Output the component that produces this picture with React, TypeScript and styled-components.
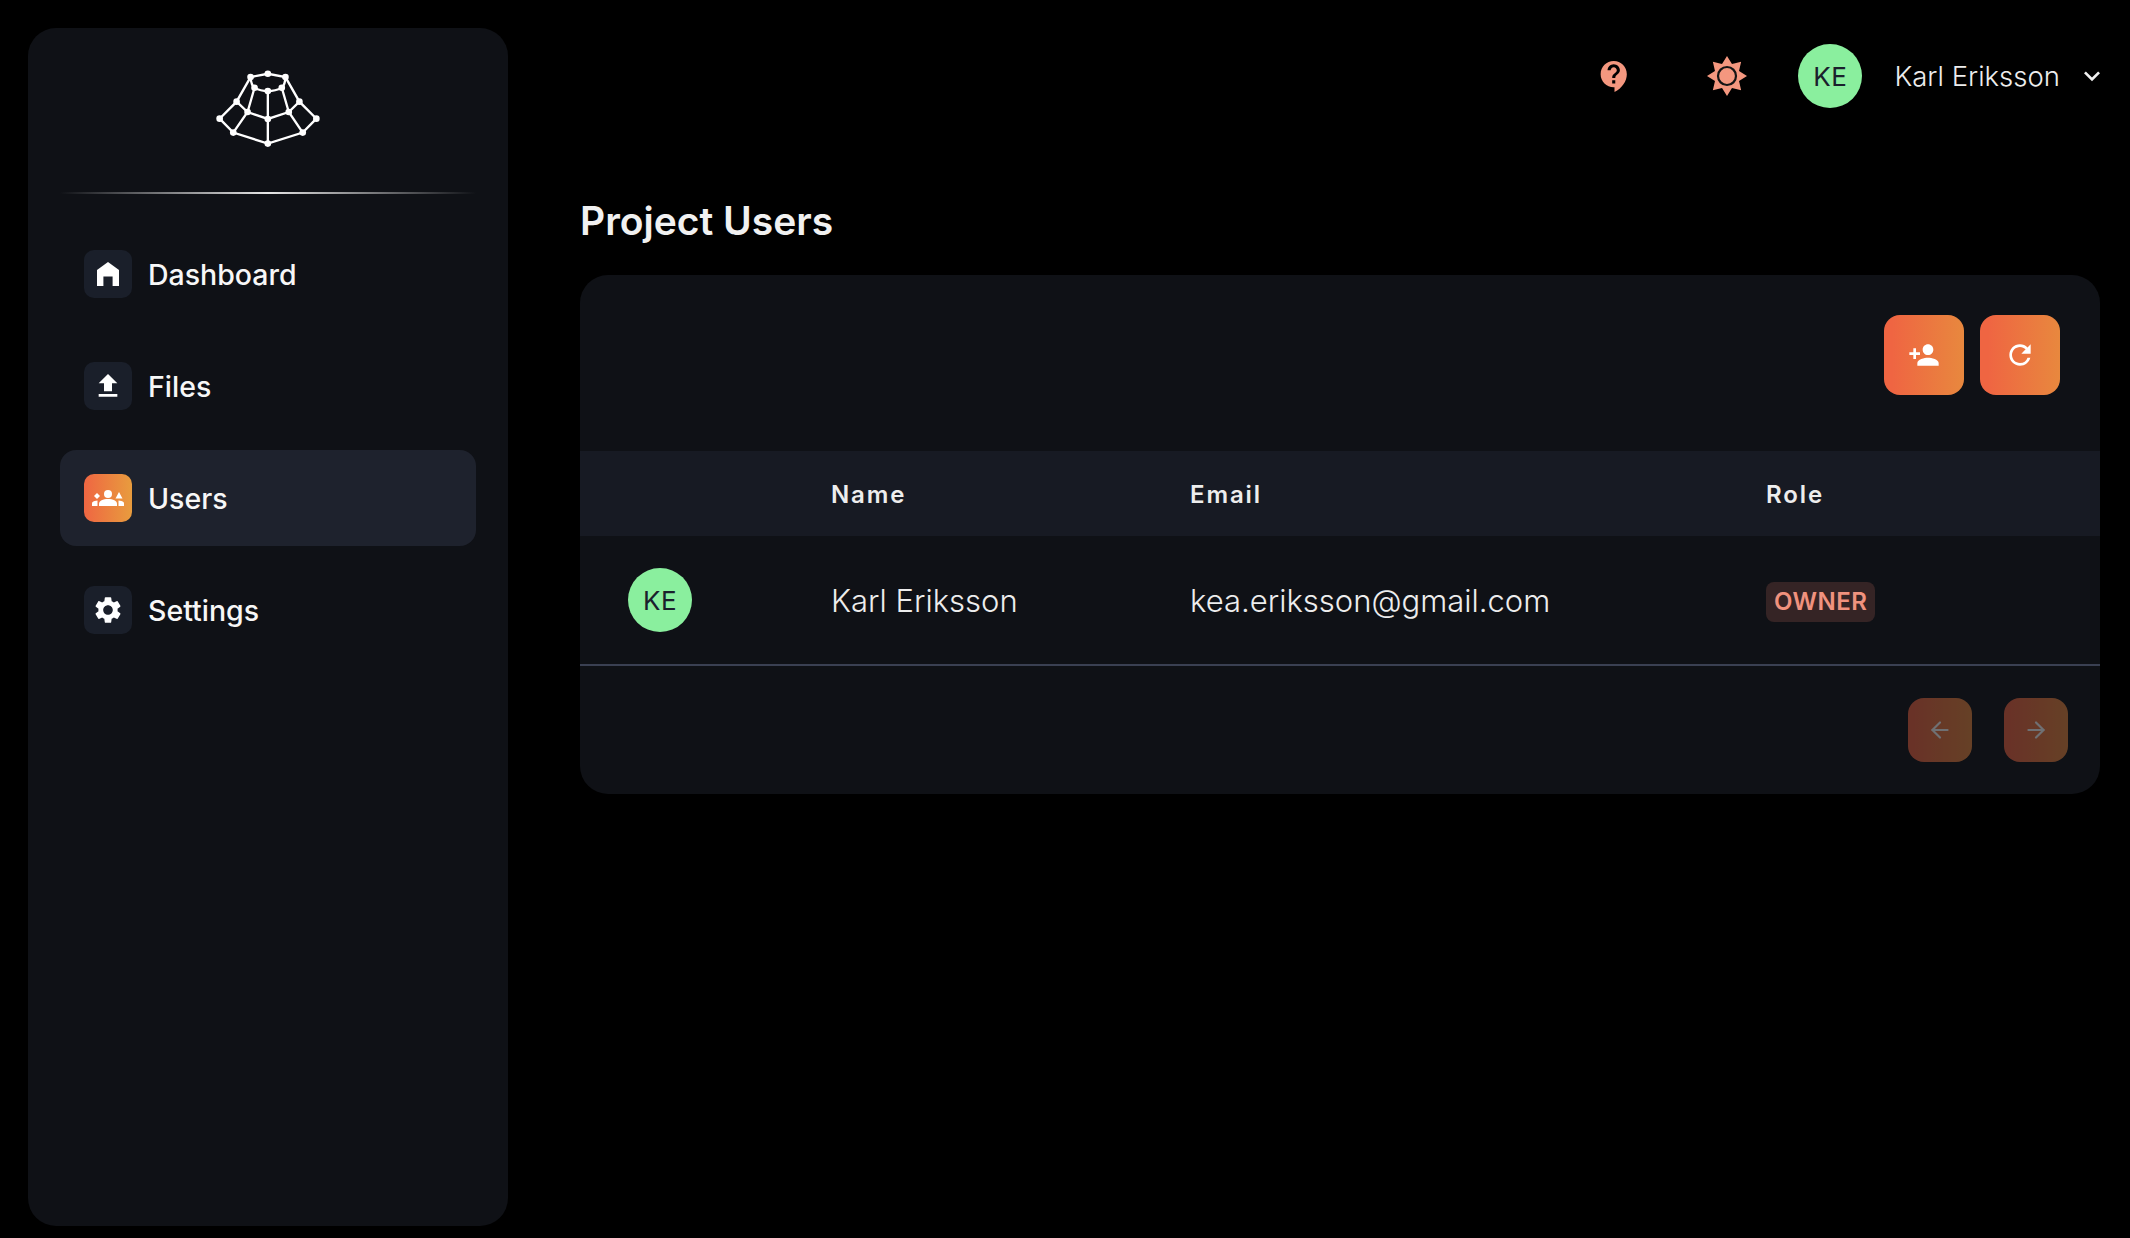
import { createGlobalStyle, styled } from "styled-components";
import { MdContactSupport, MdFileUpload, MdKeyboardArrowDown, MdPersonAdd, MdRefresh, MdSettings } from "react-icons/md";
import { ArrowLeft, ArrowRight } from "lucide-react";

const GlobalStyle = createGlobalStyle`
  * { box-sizing: border-box; }
  html, body { margin: 0; background: #000; }
  body { font-family: Inter, "Liberation Sans", sans-serif; color: #f1f1f1; }
`;

const Page = styled.div`
  display: flex;
  height: 1238px;
  padding: 28px 30px 12px 28px;
  gap: 72px;
`;

const Sidebar = styled.aside`
  width: 480px;
  flex: none;
  background: #0f1116;
  border-radius: 28px;
  padding: 0 32px;
`;

const LogoWrap = styled.div`
  height: 164px;
  display: flex;
  justify-content: center;
  padding-top: 38px;
  svg { display: block; }
`;

const Divider = styled.div`
  height: 2px;
  background: linear-gradient(90deg, transparent, #e6e6e6 50%, transparent);
  margin-bottom: 32px;
`;

const Nav = styled.nav`
  display: flex;
  flex-direction: column;
  gap: 16px;
`;

const NavItem = styled.a<{ $active?: boolean }>`
  height: 96px;
  display: flex;
  align-items: center;
  gap: 16px;
  padding-left: 24px;
  border-radius: 16px;
  background: ${p => (p.$active ? "#1e222d" : "transparent")};
  color: #f7f7f7;
  font-size: 28.5px;
  font-weight: 500;
`;

const NavIcon = styled.span<{ $active?: boolean }>`
  width: 48px;
  height: 48px;
  display: flex;
  align-items: center;
  justify-content: center;
  border-radius: 10px;
  background: ${p => (p.$active ? "linear-gradient(90deg, #ef6642, #e89c3e)" : "#1a1f2a")};
  color: #fff;
  svg { display: block; }
`;

const Main = styled.main`
  flex: 1;
  min-width: 0;
`;

const TopBar = styled.header`
  height: 80px;
  margin-top: 8px;
  display: flex;
  align-items: center;
  justify-content: flex-end;
`;

const TopIcon = styled.span<{ $gap: number }>`
  display: flex;
  color: #f4977f;
  margin-right: ${p => p.$gap}px;
`;

const Avatar = styled.span`
  width: 64px;
  height: 64px;
  border-radius: 50%;
  display: flex;
  align-items: center;
  justify-content: center;
  background: #8aef9e;
  color: #1a202c;
  font-size: 26px;
  font-weight: 400;
  letter-spacing: 0.5px;
`;

const UserName = styled.span`
  margin-left: 32px;
  font-size: 27.5px;
  font-weight: 300;
  color: #ededed;
`;

const Chevron = styled.span`
  display: flex;
  margin-left: 16px;
  margin-right: -8px;
  color: #f1f1f1;
`;

const Title = styled.h1`
  margin: 81px 0 30px;
  font-size: 39px;
  line-height: 48px;
  font-weight: 600;
  color: #f1f1f1;
`;

const Card = styled.section`
  background: #0f1116;
  border-radius: 28px;
  overflow: hidden;
`;

const CardTools = styled.div`
  height: 176px;
  display: flex;
  justify-content: flex-end;
  align-items: flex-start;
  gap: 16px;
  padding: 40px 40px 0 0;
`;

const GradientButton = styled.button<{ $size: number; $disabled?: boolean }>`
  width: ${p => p.$size}px;
  height: ${p => p.$size}px;
  border: 0;
  padding: 0;
  display: flex;
  align-items: center;
  justify-content: center;
  border-radius: 16px;
  background: linear-gradient(90deg, #ef6542 10%, #e8883e);
  color: #fff;
  opacity: ${p => (p.$disabled ? 0.4 : 1)};
`;

const Columns = styled.div`
  display: grid;
  grid-template-columns: 251px 359px 576px 1fr;
  align-items: center;
`;

const HeadRow = styled(Columns)`
  height: 85px;
  padding-top: 2px;
  background: #171a23;
  font-size: 24px;
  font-weight: 600;
  letter-spacing: 1.9px;
  color: #ededed;
`;

const BodyRow = styled(Columns)`
  height: 130px;
  border-bottom: 2px solid #3a4052;
  font-size: 31px;
  font-weight: 300;
  color: #ededed;
`;

const AvatarCell = styled.div`
  padding-left: 48px;
`;

const Badge = styled.span`
  display: block;
  width: fit-content;
  height: 40px;
  margin-top: 4px;
  line-height: 40px;
  padding: 0 8px;
  border-radius: 8px;
  background: #352425;
  color: #f0927e;
  font-size: 24px;
  font-weight: 600;
  letter-spacing: 0.5px;
`;

const Pager = styled.div`
  height: 128px;
  display: flex;
  justify-content: flex-end;
  gap: 32px;
  padding: 32px 32px 0 0;
`;

const logoNodes = [
  [210, 113], [262, 103], [315, 113], [222, 145], [262, 155], [304, 145],
  [168, 187], [201, 218], [262, 239], [325, 218], [357, 187],
  [117, 238], [158, 280], [262, 313], [367, 280], [408, 238],
];

function Logo() {
  return (
    <svg width="114" height="88" viewBox="91 80 343 264" fill="none" stroke="#fff" strokeWidth="7">
      <path d="M210 113L262 103L315 113L357 187L408 238L367 280L262 313L158 280L117 238L168 187L210 113" />
      <path d="M210 113Q212 138 222 145Q240 155 262 155Q285 155 304 145Q314 136 315 113" />
      <path d="M222 145L201 218L158 280M304 145L325 218L367 280M168 187L201 218L262 239L325 218L357 187M262 155V313" />
      {logoNodes.map(([x, y]) => <circle key={`${x}-${y}`} cx={x} cy={y} r="10" fill="#fff" stroke="none" />)}
    </svg>
  );
}

function HomeIcon() {
  return (
    <svg width="22" height="24" viewBox="0 0 22 24" fill="#fff">
      <path d="M11 0L22 8V24H15.600V14.600H6.400V24H0V8Z" />
    </svg>
  );
}

function GroupIcon() {
  return (
    <svg width="32" height="16" viewBox="0 0 32 16" fill="#fff">
      <circle cx="16" cy="4" r="4" />
      <path d="M7 16V14C7 10.500 11 9 16 9C21 9 25 10.500 25 14V16Z" />
      <path d="M5 3L8 6L5 9L2 6Z" />
      <path d="M27 2L30.500 8.500H23.500Z" />
      <path d="M0 16V13.500C0 12 1 11 5.500 10.500C5.500 12 5.500 14 5.500 16Z" />
      <path d="M32 16V13.500C32 12 31 11 26.500 10.500C26.500 12 26.500 14 26.500 16Z" />
    </svg>
  );
}

function SunIcon() {
  const points = Array.from({ length: 16 }, (_, i) => {
    const r = i % 2 === 0 ? 20 : 13;
    const a = (i * Math.PI) / 8 - Math.PI / 2;
    return `${(20 + r * Math.cos(a)).toFixed(2)},${(20 + r * Math.sin(a)).toFixed(2)}`;
  }).join(" ");
  return (
    <svg width="40" height="40" viewBox="0 0 40 40">
      <polygon points={points} fill="#f4977f" />
      <circle cx="20" cy="20" r="9" fill="#f4977f" stroke="#141414" strokeWidth="2.200" />
    </svg>
  );
}

const navItems = [
  { label: "Dashboard", icon: <HomeIcon /> },
  { label: "Files", icon: <MdFileUpload size={32} /> },
  { label: "Users", icon: <GroupIcon />, active: true },
  { label: "Settings", icon: <MdSettings size={32} /> },
];

export default function App() {
  return (
    <Page>
      <GlobalStyle />
      <Sidebar>
        <LogoWrap><Logo /></LogoWrap>
        <Divider />
        <Nav>
          {navItems.map(item => (
            <NavItem key={item.label} $active={item.active}>
              <NavIcon $active={item.active}>{item.icon}</NavIcon>
              {item.label}
            </NavItem>
          ))}
        </Nav>
      </Sidebar>
      <Main>
        <TopBar>
          <TopIcon $gap={74}><MdContactSupport size={37} /></TopIcon>
          <TopIcon $gap={51}><SunIcon /></TopIcon>
          <Avatar>KE</Avatar>
          <UserName>Karl Eriksson</UserName>
          <Chevron><MdKeyboardArrowDown size={32} /></Chevron>
        </TopBar>
        <Title>Project Users</Title>
        <Card>
          <CardTools>
            <GradientButton $size={80}><MdPersonAdd size={32} /></GradientButton>
            <GradientButton $size={80}><MdRefresh size={32} /></GradientButton>
          </CardTools>
          <HeadRow>
            <div />
            <div>Name</div>
            <div>Email</div>
            <div>Role</div>
          </HeadRow>
          <BodyRow>
            <AvatarCell><Avatar>KE</Avatar></AvatarCell>
            <div>Karl Eriksson</div>
            <div>kea.eriksson@gmail.com</div>
            <div><Badge>OWNER</Badge></div>
          </BodyRow>
          <Pager>
            <GradientButton $size={64} $disabled><ArrowLeft size={26} strokeWidth={2} /></GradientButton>
            <GradientButton $size={64} $disabled><ArrowRight size={26} strokeWidth={2} /></GradientButton>
          </Pager>
        </Card>
      </Main>
    </Page>
  );
}
